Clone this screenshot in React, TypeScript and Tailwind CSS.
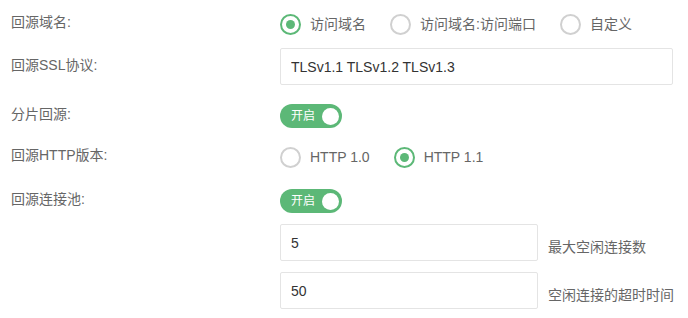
import React, { useState } from 'react';

const FONT = '"Liberation Sans", "Noto Sans CJK SC", sans-serif';

const Radio: React.FC<{ checked: boolean; label: string; onClick: () => void }> = ({ checked, label, onClick }) => (
  <button type="button" onClick={onClick} className="flex items-center gap-[9px] mr-[24px] cursor-pointer">
    <span
      className={`flex h-[21px] w-[21px] items-center justify-center rounded-full border-2 ${
        checked ? 'border-[#5cb877]' : 'border-[#d0d0d0]'
      }`}
    >
      {checked && <span className="h-[9px] w-[9px] rounded-full bg-[#5cb877]" />}
    </span>
    <span className="text-[14px] text-[#666]">{label}</span>
  </button>
);

const Toggle: React.FC<{ on: boolean; onClick: () => void }> = ({ on, onClick }) => (
  <button
    type="button"
    onClick={onClick}
    className={`flex h-[24px] w-[62px] items-center justify-between rounded-full pl-[11px] pr-[3px] ${
      on ? 'bg-[#5cb877]' : 'bg-[#ccc]'
    }`}
  >
    <span className="text-[12px] text-white">{on ? '开启' : '关闭'}</span>
    <span className="h-[17px] w-[17px] rounded-full bg-white" />
  </button>
);

const Label: React.FC<{ children: React.ReactNode }> = ({ children }) => (
  <div className="w-[280px] shrink-0 pl-[11px] pb-[3px] text-[14px] text-[#666]">{children}</div>
);

const inputCls = 'h-[37px] rounded-[2px] border border-[#e4e4e4] px-[10px] text-[14px] text-[#333] outline-none';

export default function App() {
  const [host, setHost] = useState(0);
  const [http, setHttp] = useState(1);
  const [slice, setSlice] = useState(true);
  const [pool, setPool] = useState(true);
  const [ssl, setSsl] = useState('TLSv1.1 TLSv1.2 TLSv1.3');
  const [maxIdle, setMaxIdle] = useState('5');
  const [timeout, setTimeoutVal] = useState('50');

  return (
    <div className="w-[688px] h-[318px] bg-white" style={{ fontFamily: FONT }}>
      <div className="flex flex-col pt-[12px]">
        <div className="flex h-[24px] items-center">
          <Label>回源域名:</Label>
          <Radio checked={host === 0} label="访问域名" onClick={() => setHost(0)} />
          <Radio checked={host === 1} label="访问域名:访问端口" onClick={() => setHost(1)} />
          <Radio checked={host === 2} label="自定义" onClick={() => setHost(2)} />
        </div>

        <div className="mt-[12px] flex items-center">
          <Label>回源SSL协议:</Label>
          <input value={ssl} onChange={(e) => setSsl(e.target.value)} className={`${inputCls} w-[393px]`} />
        </div>

        <div className="mt-[19px] flex h-[24px] items-center">
          <Label>分片回源:</Label>
          <Toggle on={slice} onClick={() => setSlice(!slice)} />
        </div>

        <div className="mt-[17px] flex h-[24px] items-center">
          <Label>回源HTTP版本:</Label>
          <Radio checked={http === 0} label="HTTP 1.0" onClick={() => setHttp(0)} />
          <Radio checked={http === 1} label="HTTP 1.1" onClick={() => setHttp(1)} />
        </div>

        <div className="mt-[20px] flex h-[24px] items-center">
          <Label>回源连接池:</Label>
          <Toggle on={pool} onClick={() => setPool(!pool)} />
        </div>

        <div className="mt-[11px] flex items-center pl-[280px]">
          <input value={maxIdle} onChange={(e) => setMaxIdle(e.target.value)} className={`${inputCls} w-[258px]`} />
          <span className="ml-[10px] pt-[10px] text-[14px] text-[#666]">最大空闲连接数</span>
        </div>

        <div className="mt-[11px] flex items-center pl-[280px]">
          <input value={timeout} onChange={(e) => setTimeoutVal(e.target.value)} className={`${inputCls} w-[258px]`} />
          <span className="ml-[10px] pt-[10px] text-[14px] text-[#666]">空闲连接的超时时间</span>
        </div>
      </div>
    </div>
  );
}
